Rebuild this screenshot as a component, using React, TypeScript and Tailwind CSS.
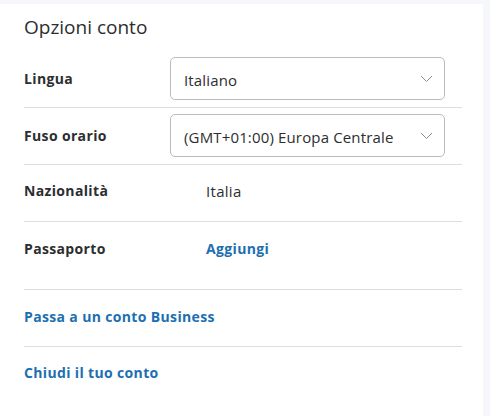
const font = { fontFamily: '"Open Sans", "Liberation Sans", sans-serif' }

function Chevron() {
  return (
    <svg width="13" height="8" viewBox="0 0 13 8" fill="none">
      <polyline points="1,1 6.5,6.5 12,1" stroke="#8a8f94" strokeWidth="1" />
    </svg>
  )
}

function Select({ value }: { value: string }) {
  return (
    <div className="flex h-[43px] w-[275px] items-center justify-between rounded-[5px] border border-[#b9bcc0] pl-[13px] pr-[11px]">
      <span className="mt-[4px] text-[15px] tracking-[0.15px] text-[#2c2e2f]">{value}</span>
      <Chevron />
    </div>
  )
}

export default function App() {
  return (
    <div className="h-[416px] w-[490px] bg-[#f5f7fa] pt-[4px] pr-[7px]" style={font}>
      <div className="h-full bg-white pl-6 pr-[21px] pt-[11px]">
        <h2 className="h-[24px] text-[19px] leading-[24px] text-[#2c2e2f]">Opzioni conto</h2>

        <div className="mt-[11px] flex items-center border-b border-[#dcdee0] pt-[7px] pb-[7px]">
          <span className="w-[146px] text-[14px] font-bold tracking-[0.35px] text-[#2c2e2f]">Lingua</span>
          <Select value="Italiano" />
        </div>

        <div className="flex items-center border-b border-[#dcdee0] pt-[6px] pb-[7px]">
          <span className="w-[146px] text-[14px] font-bold tracking-[0.35px] text-[#2c2e2f]">Fuso orario</span>
          <Select value="(GMT+01:00) Europa Centrale" />
        </div>

        <div className="flex h-[57px] border-b border-[#dcdee0] pt-[17px] leading-[18px]">
          <span className="w-[182px] text-[14px] font-bold tracking-[0.35px] text-[#2c2e2f]">Nazionalità</span>
          <span className="text-[15px] tracking-[0.3px] text-[#2c2e2f]">Italia</span>
        </div>

        <div className="flex h-[68px] border-b border-[#dcdee0] pt-[18px] leading-[18px]">
          <span className="w-[182px] text-[14px] font-bold tracking-[0.35px] text-[#2c2e2f]">Passaporto</span>
          <a className="text-[14px] font-bold tracking-[0.35px] text-[#1d6fb2]">Aggiungi</a>
        </div>

        <div className="flex h-[57px] items-center border-b border-[#dcdee0] pb-[3px]">
          <a className="text-[14px] font-bold tracking-[0.35px] text-[#1d6fb2]">Passa a un conto Business</a>
        </div>

        <div className="flex h-[56px] items-center pb-[5px]">
          <a className="text-[14px] font-bold tracking-[0.35px] text-[#1d6fb2]">Chiudi il tuo conto</a>
        </div>
      </div>
    </div>
  )
}
